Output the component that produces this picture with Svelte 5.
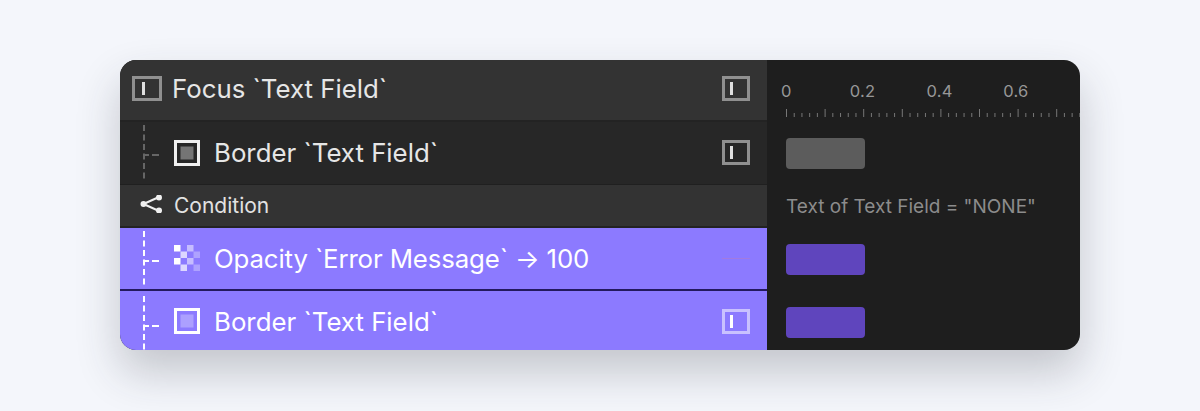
<script lang="ts">
  // Animation timeline panel: action rows on the left, ruler and blocks on the right.
  const labels = ['0', '0.2', '0.4', '0.6'];

  // 5 ticks per 38.5px, every 5th one is tall.
  const ticks = Array.from({ length: 40 }, (_, i) => i);
  const step = 7.72;

  const cells = [
    [0, 0, 1],
    [2, 0, 0.5],
    [1, 1, 0.7],
    [3, 1, 0.3],
    [0, 2, 1],
    [2, 2, 0.5],
    [1, 3, 0.7],
    [3, 3, 0.3],
  ];
</script>

{#snippet fieldIcon(w)}
  <svg class="field" width={w} height="25" viewBox="0 0 {w} 25">
    <rect class="field-frame" x="1.5" y="1.5" width={w - 3} height="22" />
    <rect class="field-bar" x={w - 20} y="6" width="3" height="13" />
  </svg>
{/snippet}

{#snippet borderIcon()}
  <svg class="glyph" width="26" height="26" viewBox="0 0 26 26">
    <rect class="border-frame" x="1.5" y="1.5" width="23" height="23" />
    <rect class="border-fill" x="6.5" y="6.5" width="13" height="13" />
  </svg>
{/snippet}

{#snippet connector()}
  <svg class="connector" width="24" height="60" viewBox="0 0 24 60">
    <path d="M2 3V60" stroke-dasharray="6 3.5" />
    <path d="M2 33H7M10 33H17" />
  </svg>
{/snippet}

<div class="page">
  <div class="card">
    <div class="actions">
      <div class="row head">
        {@render fieldIcon(30)}
        <span class="title">Focus `Text Field`</span>
        {@render fieldIcon(28)}
      </div>
      <div class="row child">
        {@render connector()}
        {@render borderIcon()}
        <span class="label">Border `Text Field`</span>
        {@render fieldIcon(28)}
      </div>
      <div class="row condition">
        <svg class="branch" width="22" height="18" viewBox="0 0 22 18">
          <path d="M3.5 9L19 2M3.5 9L19 16" />
          <circle cx="3.5" cy="9" r="3" />
          <circle cx="19" cy="2.5" r="3" />
          <circle cx="19" cy="15.5" r="3" />
        </svg>
        <span class="cond-label">Condition</span>
      </div>
      <div class="row child active">
        {@render connector()}
        <svg class="glyph" width="26" height="26" viewBox="0 0 26 26">
          {#each cells as [cx, cy, alpha]}
            <rect x={cx * 6.5} y={cy * 6.5} width="6.5" height="6.5" fill="#fff" opacity={alpha} />
          {/each}
        </svg>
        <span class="label tight">Opacity `Error Message` → 100</span>
        <span class="trace"></span>
      </div>
      <div class="row child active last">
        {@render connector()}
        {@render borderIcon()}
        <span class="label">Border `Text Field`</span>
        {@render fieldIcon(28)}
      </div>
    </div>

    <div class="timeline">
      <div class="ruler">
        <div class="numbers">
          {#each labels as label}
            <span class="number">{label}</span>
          {/each}
        </div>
        <svg class="ticks" width="294" height="10" viewBox="0 0 294 10">
          {#each ticks as t}
            <line x1={t * step + 0.5} x2={t * step + 0.5} y1={t % 5 === 0 ? 1 : 5} y2="9" />
          {/each}
        </svg>
      </div>
      <div class="lane lane-first"><span class="block"></span></div>
      <div class="lane lane-text">Text of Text Field = "NONE"</div>
      <div class="lane lane-third"><span class="block purple"></span></div>
      <div class="lane lane-last"><span class="block purple"></span></div>
    </div>
  </div>
</div>

<style>
  :global(body) {
    margin: 0;
    background: #f4f6fb;
  }

  .page {
    width: 1200px;
    height: 411px;
    padding: 60px 120px 0;
    box-sizing: border-box;
    overflow: hidden;
    font-family: Inter, 'Liberation Sans', sans-serif;
  }

  .card {
    display: flex;
    height: 290px;
    border-radius: 16px;
    overflow: hidden;
    background: #1e1e1e;
    box-shadow: 0 22px 44px rgba(40, 44, 60, 0.24);
  }

  .actions {
    width: 647px;
    display: flex;
    flex-direction: column;
    color: #e6e6e6;
  }

  .row {
    display: flex;
    align-items: center;
    flex-shrink: 0;
    box-sizing: border-box;
  }

  .head {
    height: 62px;
    padding: 0 17px 4px 12px;
    background: #333;
    border-bottom: 2px solid #232323;
  }

  .title {
    margin-left: 10px;
    font-size: 25.8px;
    flex: 1;
  }

  .child {
    height: 63px;
    padding: 0 17px 1px 22px;
    background: #272727;
    border-bottom: 1px solid #202020;
    overflow: hidden;
  }

  .label {
    margin-left: 14px;
    font-size: 25.8px;
    flex: 1;
    white-space: nowrap;
  }

  .label.tight {
    letter-spacing: -0.13px;
  }

  .condition {
    height: 43px;
    padding: 0 0 1px 20px;
    background: #333;
    border-bottom: 2px solid #232323;
  }

  .cond-label {
    margin-left: 12px;
    font-size: 21px;
    color: #e2e2e2;
  }

  .active {
    height: 63px;
    background: #8c7aff;
    color: #fff;
    border-bottom: 2px solid #241a5e;
  }

  .active.last {
    height: 59px;
    padding-top: 2px;
    border-bottom: 0;
  }

  .connector {
    flex-shrink: 0;
    align-self: flex-start;
    margin-right: 8px;
    fill: none;
    stroke: #666;
    stroke-width: 2;
  }

  .active .connector {
    stroke: #fff;
  }

  .glyph,
  .field {
    flex-shrink: 0;
  }

  .branch {
    flex-shrink: 0;
    margin-top: -3px;
    fill: #f0f0f0;
    stroke: none;
  }

  .branch path {
    fill: none;
    stroke: #f0f0f0;
    stroke-width: 2;
  }

  .field-frame {
    fill: none;
    stroke: #909090;
    stroke-width: 3;
  }

  .field-bar {
    fill: #e0e0e0;
  }

  .active .field-frame {
    stroke: #c9c1ff;
  }

  .active .field-bar {
    fill: #fff;
  }

  .border-frame {
    fill: none;
    stroke: #f0f0f0;
    stroke-width: 3;
  }

  .border-fill {
    fill: #757575;
  }

  .active .border-frame {
    stroke: #fff;
  }

  .active .border-fill {
    fill: #aca0ff;
  }

  .trace {
    width: 28px;
    height: 1px;
    background: #a27ae0;
  }

  .timeline {
    flex: 1;
    display: flex;
    flex-direction: column;
    overflow: hidden;
    color: #8c8c8c;
  }

  .ruler {
    height: 62px;
    padding: 21px 0 0 14px;
    box-sizing: border-box;
    flex-shrink: 0;
  }

  .numbers {
    display: flex;
    height: 21px;
    font-size: 16.5px;
    line-height: 21px;
    color: #979797;
    letter-spacing: 0.2px;
  }

  .number {
    width: 77px;
  }

  .number:first-child {
    width: 69px;
  }

  .ticks {
    display: block;
    margin: 6px 0 0 5px;
    stroke: #777;
    stroke-width: 1;
  }

  .lane {
    display: flex;
    align-items: center;
    padding-left: 19px;
    flex-shrink: 0;
  }

  .lane-first {
    height: 62px;
  }

  .lane-text {
    height: 44px;
    font-size: 19px;
  }

  .lane-third {
    height: 62px;
  }

  .lane-last {
    height: 60px;
    padding-top: 4px;
    box-sizing: border-box;
  }

  .block {
    display: block;
    width: 79px;
    height: 31px;
    border-radius: 4px;
    background: #5c5c5c;
  }

  .block.purple {
    background: #5f45bd;
  }
</style>
